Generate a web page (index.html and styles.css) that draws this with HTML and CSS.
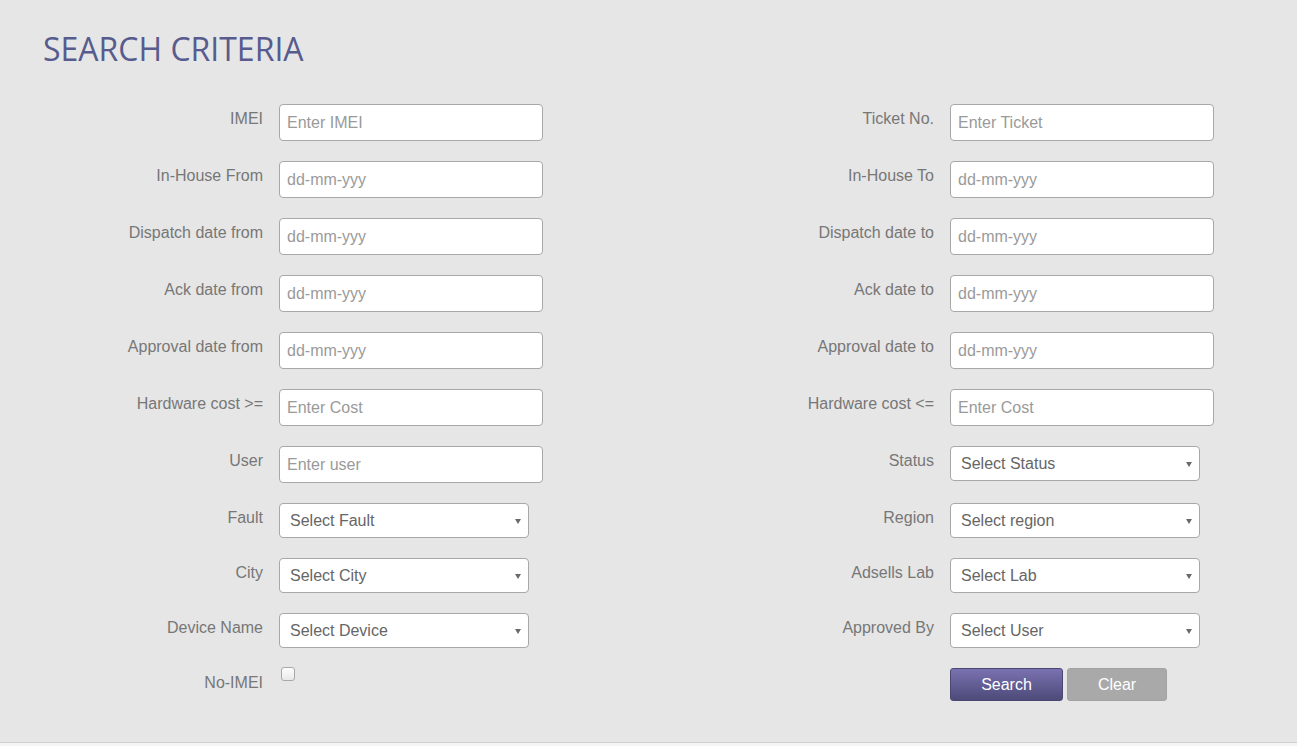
FILE: index.html
```html
<!DOCTYPE html>
<html>
<head>
<meta charset="utf-8">
<link rel="stylesheet" href="styles.css">
</head>
<body>
<section class="panel">
  <h1 class="title">SEARCH CRITERIA</h1>
  <form class="grid">
    <label class="lbl">IMEI</label>
    <div class="field"><input class="inp" placeholder="Enter IMEI"></div>
    <label class="lbl">Ticket No.</label>
    <div class="field"><input class="inp" placeholder="Enter Ticket"></div>

    <label class="lbl">In-House From</label>
    <div class="field"><input class="inp" placeholder="dd-mm-yyy"></div>
    <label class="lbl">In-House To</label>
    <div class="field"><input class="inp" placeholder="dd-mm-yyy"></div>

    <label class="lbl">Dispatch date from</label>
    <div class="field"><input class="inp" placeholder="dd-mm-yyy"></div>
    <label class="lbl">Dispatch date to</label>
    <div class="field"><input class="inp" placeholder="dd-mm-yyy"></div>

    <label class="lbl">Ack date from</label>
    <div class="field"><input class="inp" placeholder="dd-mm-yyy"></div>
    <label class="lbl">Ack date to</label>
    <div class="field"><input class="inp" placeholder="dd-mm-yyy"></div>

    <label class="lbl">Approval date from</label>
    <div class="field"><input class="inp" placeholder="dd-mm-yyy"></div>
    <label class="lbl">Approval date to</label>
    <div class="field"><input class="inp" placeholder="dd-mm-yyy"></div>

    <label class="lbl">Hardware cost &gt;=</label>
    <div class="field"><input class="inp" placeholder="Enter Cost"></div>
    <label class="lbl">Hardware cost &lt;=</label>
    <div class="field"><input class="inp" placeholder="Enter Cost"></div>

    <label class="lbl">User</label>
    <div class="field"><input class="inp" placeholder="Enter user"></div>
    <label class="lbl">Status</label>
    <div class="field"><div class="sel-wrap"><select class="sel"><option>Select Status</option></select></div></div>

    <label class="lbl">Fault</label>
    <div class="field"><div class="sel-wrap"><select class="sel"><option>Select Fault</option></select></div></div>
    <label class="lbl">Region</label>
    <div class="field"><div class="sel-wrap"><select class="sel"><option>Select region</option></select></div></div>

    <label class="lbl">City</label>
    <div class="field"><div class="sel-wrap"><select class="sel"><option>Select City</option></select></div></div>
    <label class="lbl">Adsells Lab</label>
    <div class="field"><div class="sel-wrap"><select class="sel"><option>Select Lab</option></select></div></div>

    <label class="lbl">Device Name</label>
    <div class="field"><div class="sel-wrap"><select class="sel"><option>Select Device</option></select></div></div>
    <label class="lbl">Approved By</label>
    <div class="field"><div class="sel-wrap"><select class="sel"><option>Select User</option></select></div></div>

    <label class="lbl">No-IMEI</label>
    <div class="field"><input type="checkbox" class="chk"></div>
    <div class="lbl"></div>
    <div class="field buttons">
      <button type="button" class="btn btn-search">Search</button>
      <button type="button" class="btn btn-clear">Clear</button>
    </div>
  </form>
</section>
</body>
</html>
```

FILE: styles.css
```css
html, body {
  margin: 0;
  padding: 0;
}
body {
  background: #f4f4f4;
  font-family: "Liberation Sans", Arial, sans-serif;
  font-size: 16px;
}
.panel {
  background: #e6e6e6;
  height: 743px;
  box-sizing: border-box;
  border-bottom: 1px solid #cfcfcf;
  overflow: hidden;
}
.title {
  margin: 27px 0 0 43px;
  font-family: "Open Sans", sans-serif;
  font-weight: 400;
  font-size: 32px;
  line-height: 44px;
  color: #585b8d;
  letter-spacing: 0;
}
.grid {
  margin: 33px 0 0 0;
  display: grid;
  grid-template-columns: 279px 392px 279px 1fr;
  row-gap: 20px;
  align-items: start;
}
.lbl {
  box-sizing: border-box;
  padding-right: 16px;
  padding-top: 5px;
  text-align: right;
  line-height: 20px;
  color: #777777;
  font-size: 16px;
}
.field {
  display: flex;
}
.inp {
  box-sizing: border-box;
  width: 264px;
  height: 37px;
  border: 1px solid #a8a8a8;
  border-radius: 4px;
  background: #fff;
  padding: 0 7px;
  font-family: "Liberation Sans", Arial, sans-serif;
  font-size: 16px;
  color: #555;
  outline: none;
}
.inp::placeholder {
  color: #9a9a9a;
}
.sel-wrap {
  position: relative;
  width: 250px;
  height: 35px;
}
.sel-wrap::after {
  content: "";
  position: absolute;
  right: 8px;
  top: 16px;
  width: 0;
  height: 0;
  border-left: 3px solid transparent;
  border-right: 3px solid transparent;
  border-top: 5px solid #6a6a6a;
  pointer-events: none;
}
.sel {
  -webkit-appearance: none;
  appearance: none;
  box-sizing: border-box;
  width: 250px;
  height: 35px;
  border: 1px solid #a8a8a8;
  border-radius: 4px;
  background: #fff;
  padding: 0 10px;
  font-family: "Liberation Sans", Arial, sans-serif;
  font-size: 16px;
  color: #666666;
  outline: none;
}
.chk {
  -webkit-appearance: none;
  appearance: none;
  box-sizing: border-box;
  width: 14px;
  height: 14px;
  margin: -1px 0 0 2px;
  border: 1px solid #a9a9a9;
  border-radius: 3px;
  background: linear-gradient(#fdfdfd, #e9e9e9);
}
.buttons {
  gap: 4px;
}
.btn {
  box-sizing: border-box;
  height: 33px;
  border-radius: 3px;
  font-family: "Liberation Sans", Arial, sans-serif;
  font-size: 16px;
  color: #fff;
  padding: 0;
  cursor: pointer;
}
.btn-search {
  width: 113px;
  border: 1px solid #4a4873;
  background: linear-gradient(#7a72b1, #4d4a78);
}
.btn-clear {
  width: 100px;
  border: 1px solid #a3a3a3;
  background: #a9a9a9;
}
```
